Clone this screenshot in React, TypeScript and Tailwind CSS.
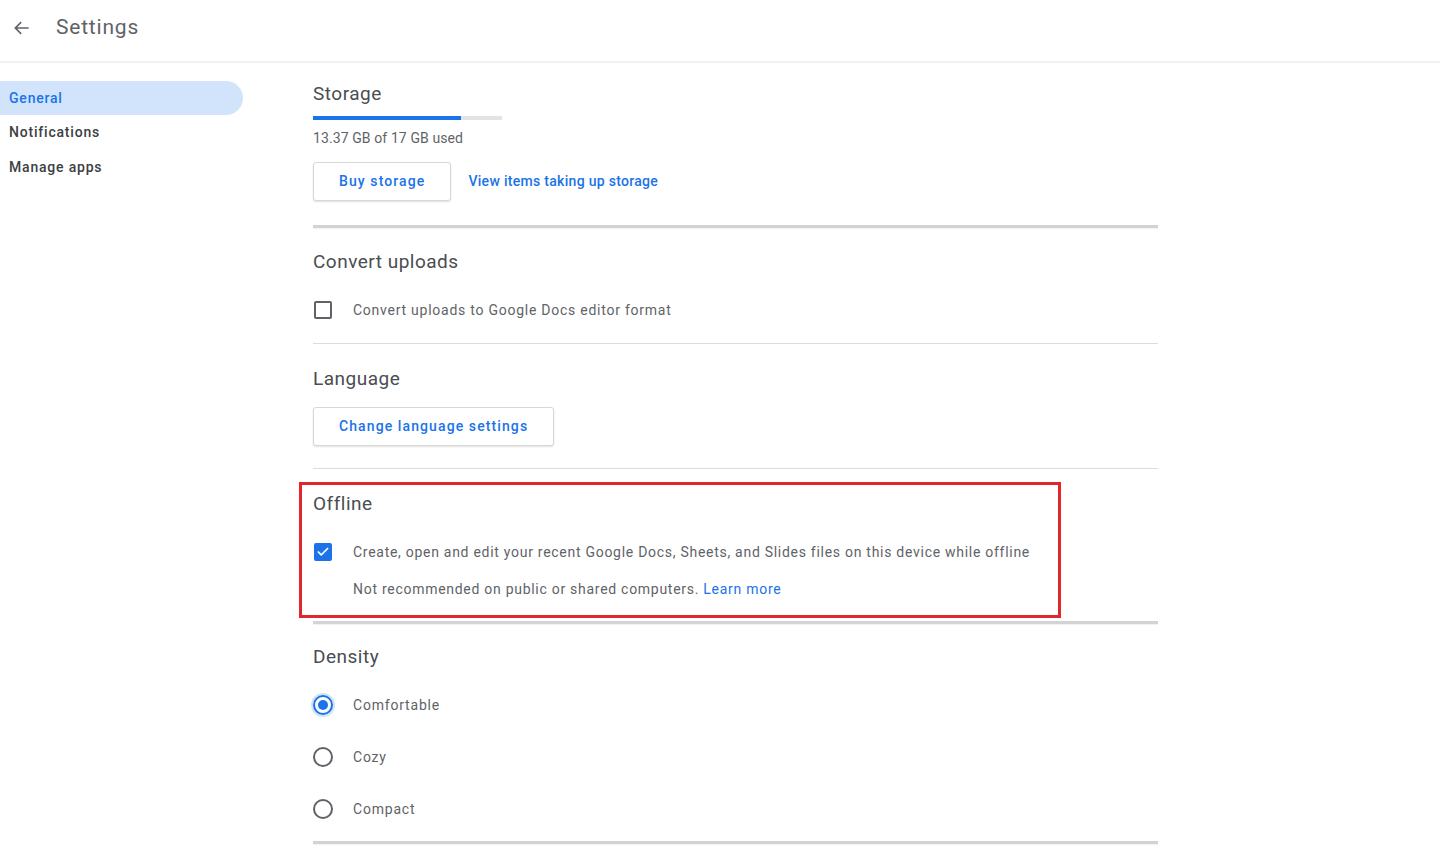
import { Check } from 'lucide-react'

const font = { fontFamily: 'Roboto, "Noto Sans", Arial, sans-serif' }

function Divider({ thick }: { thick?: boolean }) {
  return thick ? (
    <div className="h-[3px] bg-[#d3d3d3] shadow-[0_1px_1px_rgba(0,0,0,0.06)]" />
  ) : (
    <div className="h-px bg-[#dadce0]" />
  )
}

function Heading({ children }: { children: string }) {
  return <h2 className="text-[19px] leading-6 text-[#4a4d51] tracking-[0.5px]">{children}</h2>
}

function OutlineButton({ children }: { children: string }) {
  return (
    <button className="h-[39px] px-[25px] rounded-[3px] border border-[#d5d7db] bg-white text-[14px] font-medium text-[#1a73e8] tracking-[1.1px] shadow-[0_1px_2px_rgba(0,0,0,0.12)]">
      {children}
    </button>
  )
}

function Radio({ label, checked }: { label: string; checked?: boolean }) {
  return (
    <div className="flex items-center h-6">
      <span
        className={`w-5 h-5 rounded-full border-2 flex items-center justify-center ${
          checked ? 'border-[#1a73e8] shadow-[0_0_0_2px_rgba(26,115,232,0.2)]' : 'border-[#5f6368]'
        }`}
      >
        {checked && <span className="w-[10px] h-[10px] rounded-full bg-[#1a73e8]" />}
      </span>
      <span className="ml-[20px] text-[14px] text-[#5f6368] tracking-[0.8px]">{label}</span>
    </div>
  )
}

export default function App() {
  return (
    <div className="min-h-screen bg-white" style={font}>
      <header className="h-[63px] flex items-center pb-[5px] border-b-2 border-[#f1f1f1]">
        <svg className="ml-[12px] w-5 h-5" viewBox="0 0 24 24" fill="none" stroke="#5f6368" strokeWidth="2">
          <path d="M20 12H5M11 5l-7 7 7 7" />
        </svg>
        <span className="ml-[24px] text-[21px] text-[#5f6368] tracking-[0.8px]">Settings</span>
      </header>

      <div className="flex">
        <nav className="w-[243px] shrink-0 pt-[18px]">
          <div className="h-[34px] flex items-center pl-[9px] rounded-r-full bg-[#d2e3fc] text-[14px] font-medium text-[#1a73e8] tracking-[0.8px]">
            General
          </div>
          <div className="h-[35px] flex items-center pl-[9px] text-[14px] font-medium text-[#3c4043] tracking-[0.8px]">
            Notifications
          </div>
          <div className="h-[34px] flex items-center pl-[9px] text-[14px] font-medium text-[#3c4043] tracking-[0.8px]">
            Manage apps
          </div>
        </nav>

        <main className="ml-[70px] w-[845px]">
          {/* Storage */}
          <section className="pt-[19px]">
            <Heading>Storage</Heading>
            <div className="mt-[10px] w-[189px] h-[4px] bg-[#e3e3e3]">
              <div className="h-full w-[148px] bg-[#1a73e8]" />
            </div>
            <p className="mt-[9px] text-[14px] leading-[18px] text-[#5f6368] tracking-[0.1px]">13.37 GB of 17 GB used</p>
            <div className="mt-[15px] flex items-center gap-[17px]">
              <OutlineButton>Buy storage</OutlineButton>
              <a className="text-[14px] font-medium text-[#1a73e8] tracking-[0.3px]">View items taking up storage</a>
            </div>
            <div className="mt-[24px]">
              <Divider thick />
            </div>
          </section>

          {/* Convert uploads */}
          <section className="pt-[22px]">
            <Heading>Convert uploads</Heading>
            <div className="mt-[24px] flex items-center h-6">
              <span className="w-[18px] h-[18px] ml-px rounded-[2px] border-2 border-[#5f6368]" />
              <span className="ml-[21px] text-[14px] text-[#5f6368] tracking-[0.75px]">
                Convert uploads to Google Docs editor format
              </span>
            </div>
            <div className="mt-[21px]">
              <Divider />
            </div>
          </section>

          {/* Language */}
          <section className="pt-[23px]">
            <Heading>Language</Heading>
            <div className="mt-[16px]">
              <OutlineButton>Change language settings</OutlineButton>
            </div>
            <div className="mt-[22px]">
              <Divider />
            </div>
          </section>

          {/* Offline */}
          <section className="relative pt-[23px]">
            <Heading>Offline</Heading>
            <div className="mt-[24px] flex items-center h-6">
              <span className="w-[18px] h-[18px] ml-px rounded-[2px] bg-[#1a73e8] flex items-center justify-center">
                <Check size={14} strokeWidth={3} color="white" />
              </span>
              <span className="ml-[21px] text-[14px] text-[#5f6368] tracking-[0.72px]">
                Create, open and edit your recent Google Docs, Sheets, and Slides files on this device while offline
              </span>
            </div>
            <p className="mt-[13px] h-6 flex items-center pl-[40px] text-[14px] text-[#5f6368] tracking-[0.72px]">
              Not recommended on public or shared computers.&nbsp;<a className="text-[#1a73e8]">Learn more</a>
            </p>
            <div className="mt-[20px]">
              <Divider thick />
            </div>
            <div className="absolute top-[13px] left-[-14px] w-[762px] h-[136px] border-[3px] border-[#e3262b] pointer-events-none" />
          </section>

          {/* Density */}
          <section className="pt-[21px]">
            <Heading>Density</Heading>
            <div className="mt-[24px] flex flex-col gap-[28px]">
              <Radio label="Comfortable" checked />
              <Radio label="Cozy" />
              <Radio label="Compact" />
            </div>
            <div className="mt-[20px]">
              <Divider thick />
            </div>
          </section>
        </main>
      </div>
    </div>
  )
}
